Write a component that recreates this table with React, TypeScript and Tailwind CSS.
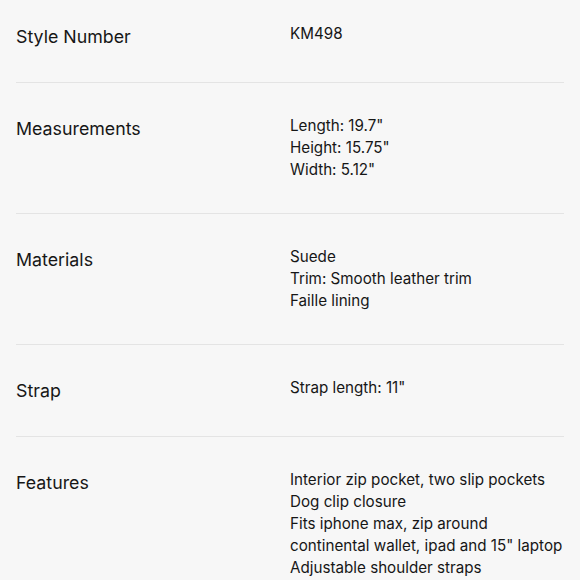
const specs: { label: string; lines: string[] }[] = [
  { label: 'Style Number', lines: ['KM498'] },
  { label: 'Measurements', lines: ['Length: 19.7"', 'Height: 15.75"', 'Width: 5.12"'] },
  { label: 'Materials', lines: ['Suede', 'Trim: Smooth leather trim', 'Faille lining'] },
  { label: 'Strap', lines: ['Strap length: 11"'] },
  {
    label: 'Features',
    lines: [
      'Interior zip pocket, two slip pockets',
      'Dog clip closure',
      'Fits iphone max, zip around continental wallet, ipad and 15" laptop',
      'Adjustable shoulder straps',
    ],
  },
];

export default function App() {
  return (
    <div
      className="min-h-screen bg-[#f7f7f7] px-4 text-[#161616]"
      style={{ fontFamily: 'Inter, "Noto Sans", sans-serif' }}
    >
      {specs.map((s, i) => (
        <div
          key={s.label}
          className={`grid grid-cols-[274px_1fr] pb-8 ${i === 0 ? 'pt-[23px]' : 'pt-8 border-t border-[#e4e4e4]'}`}
        >
          <div className="text-[17.8px] leading-[27px]">{s.label}</div>
          <div className="text-[15.2px] leading-[22px]">
            {s.lines.map((l) => (
              <div key={l}>{l}</div>
            ))}
          </div>
        </div>
      ))}
    </div>
  );
}
